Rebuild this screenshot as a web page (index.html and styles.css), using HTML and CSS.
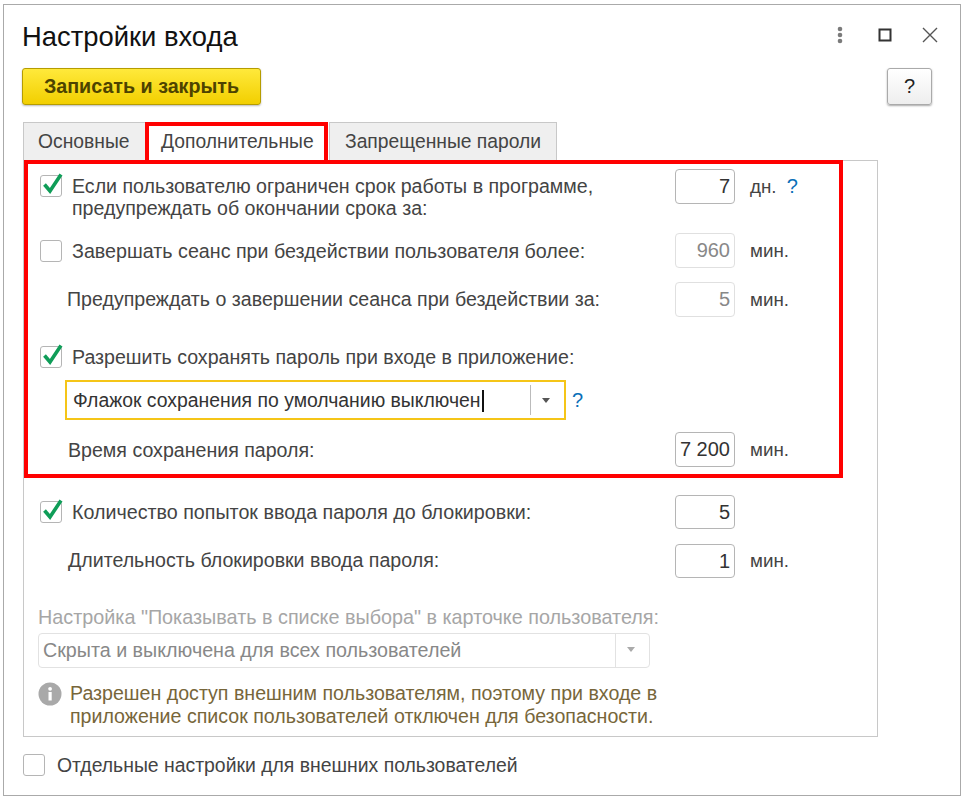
FILE: index.html
```html
<!DOCTYPE html>
<html lang="ru">
<head>
  <meta charset="UTF-8">
  <title>Настройки входа</title>
  <link rel="stylesheet" href="styles.css">
</head>
<body>

  <div class="window">

    <!-- Заголовок окна -->
    <div class="header">
      <h1>Настройки входа</h1>
      <div class="controls">
        <svg width="24" height="24" viewBox="0 0 24 24"><circle cx="12" cy="6" r="2.3" fill="#7b7b7b"/><circle cx="12" cy="12" r="2.3" fill="#7b7b7b"/><circle cx="12" cy="18" r="2.3" fill="#7b7b7b"/></svg>
        <svg width="24" height="24" viewBox="0 0 24 24"><rect x="6.5" y="6.5" width="11" height="11" fill="none" stroke="#333" stroke-width="2"/></svg>
        <svg width="24" height="24" viewBox="0 0 24 24"><path d="M5 5 L19 19 M19 5 L5 19" fill="none" stroke="#555" stroke-width="1.4"/></svg>
      </div>
    </div>

    <div class="toolbar">
      <button class="save">Записать и закрыть</button>
      <button class="help">?</button>
    </div>

    <!-- Вкладки -->
    <div class="tabs">
      <div class="tab">Основные</div>
      <div class="tab active">Дополнительные</div>
      <div class="tab">Запрещенные пароли</div>
    </div>

    <div class="panel">

      <!-- Выделенный блок настроек -->
      <div class="section">
        <div class="row row-first">
          <label class="check-label">
            <span class="checkbox"><svg width="26" height="26" viewBox="0 0 26 26"><path d="M5.5 13.5 L11 20 L22 3.5" fill="none" stroke="#0f9d58" stroke-width="3.6"/></svg></span>
            <span>Если пользователю ограничен срок работы в программе,<br>предупреждать об окончании срока за:</span>
          </label>
          <div class="field">7</div>
          <div class="unit">дн. <span class="hint">?</span></div>
        </div>
        <div class="row row-next">
          <label class="check-label wide">
            <span class="checkbox"></span>
            <span>Завершать сеанс при бездействии пользователя более:</span>
          </label>
          <div class="field disabled">960</div>
          <div class="unit">мин.</div>
        </div>
        <div class="row row-next">
          <div class="text-label short">Предупреждать о завершении сеанса при бездействии за:</div>
          <div class="field disabled">5</div>
          <div class="unit">мин.</div>
        </div>
        <label class="check-label save-password">
          <span class="checkbox"><svg width="26" height="26" viewBox="0 0 26 26"><path d="M5.5 13.5 L11 20 L22 3.5" fill="none" stroke="#0f9d58" stroke-width="3.6"/></svg></span>
          <span>Разрешить сохранять пароль при входе в приложение:</span>
        </label>
        <div class="combo-row">
          <div class="combo focused">
            <div class="combo-text">Флажок сохранения по умолчанию выключен<span class="caret"></span></div>
            <div class="combo-arrow"></div>
          </div>
          <span class="hint">?</span>
        </div>
        <div class="row row-time">
          <div class="text-label">Время сохранения пароля:</div>
          <div class="field">7 200</div>
          <div class="unit">мин.</div>
        </div>
      </div>

      <div class="rest">
        <div class="row">
          <label class="check-label wide">
            <span class="checkbox"><svg width="26" height="26" viewBox="0 0 26 26"><path d="M5.5 13.5 L11 20 L22 3.5" fill="none" stroke="#0f9d58" stroke-width="3.6"/></svg></span>
            <span>Количество попыток ввода пароля до блокировки:</span>
          </label>
          <div class="field">5</div>
        </div>
        <div class="row row-next">
          <div class="text-label">Длительность блокировки ввода пароля:</div>
          <div class="field">1</div>
          <div class="unit">мин.</div>
        </div>

        <div class="muted-label">Настройка "Показывать в списке выбора" в карточке пользователя:</div>
        <div class="combo combo-disabled">
          <div class="combo-text">Скрыта и выключена для всех пользователей</div>
          <div class="combo-arrow"></div>
        </div>

        <div class="note">
          <svg width="24" height="24" viewBox="0 0 24 24"><circle cx="12" cy="12" r="11.5" fill="#a9a9a9"/><rect x="10.5" y="10" width="3.2" height="8.5" fill="#fff"/><circle cx="12.1" cy="6.8" r="1.9" fill="#fff"/></svg>
          <p>Разрешен доступ внешним пользователям, поэтому при входе в<br>приложение список пользователей отключен для безопасности.</p>
        </div>
      </div>
    </div>

    <label class="check-label bottom">
      <span class="checkbox"></span>
      <span>Отдельные настройки для внешних пользователей</span>
    </label>

  </div>

</body>
</html>
```

FILE: styles.css
```css
* {
  box-sizing: border-box;
}

body {
  margin: 0;
  background: #fff;
  color: #444;
  font-family: "Liberation Sans", Arial, sans-serif;
  font-size: 19.6px;
}

.window {
  width: 958px;
  height: 792px;
  margin: 4px 1px 2px 3px;
  padding-left: 18px;
  border: 1px solid #aaa;
  background: #fff;
}

.header {
  display: flex;
  justify-content: space-between;
  align-items: center;
  height: 63px;
  padding-right: 18px;
}

h1 {
  margin: 0;
  color: #111;
  font-size: 27.4px;
  font-weight: normal;
}

.controls {
  display: flex;
  gap: 21px;
  margin-top: -3px;
}

.toolbar {
  display: flex;
  justify-content: space-between;
  height: 37px;
  padding-right: 28px;
}

button {
  font-family: inherit;
  border-radius: 3px;
}

.save {
  width: 239px;
  border: 1px solid #b59c00;
  background: linear-gradient(#ffe93b, #f2cf00);
  box-shadow: 0 1px 2px #bbb;
  color: #4d4300;
  font-size: 19.7px;
  font-weight: bold;
}

.help {
  width: 45px;
  border: 1px solid #aaa;
  background: linear-gradient(#fff, #eee);
  box-shadow: 0 1px 2px #aaa;
  color: #222;
  font-size: 20px;
}

.tabs {
  display: flex;
  height: 39px;
  margin: 17px 0 0 1px;
}

.tab {
  height: 38px;
  padding: 0 15px;
  border: 1px solid #c8c8c8;
  border-bottom: none;
  background: #efefef;
  font-size: 19.3px;
  line-height: 38px;
  white-space: nowrap;
}

.tab:first-child {
  width: 123px;
  padding: 0 14px;
}

.tab:last-child {
  width: 228px;
  margin-left: 1px;
}

.tab.active {
  width: 183px;
  margin-left: -1px;
  padding: 0 12px;
  border: 4px solid #f00;
  border-bottom: none;
  background: #fff;
  line-height: 32px;
}

.panel {
  width: 855px;
  height: 577px;
  margin: -1px 0 0 1px;
  border: 1px solid #c8c8c8;
}

.section {
  width: 819px;
  height: 318px;
  margin-top: -1px;
  padding: 5px 0 0 12px;
  border: 4px solid #f00;
}

.row {
  display: grid;
  grid-template-columns: 635px 60px auto;
  align-items: center;
}

.row-first {
  align-items: start;
  height: 50px;
}

.row-next {
  margin-top: 14px;
}

.row-time {
  margin-top: 12px;
}

.row-time .text-label {
  padding-top: 2px;
}

.check-label {
  display: flex;
  align-items: flex-start;
  gap: 10px;
  line-height: 22px;
}

.check-label.wide {
  font-size: 19.7px;
}

.row-first .check-label {
  padding-top: 6px;
}

.checkbox {
  flex: none;
  width: 22px;
  height: 22px;
  border: 1px solid #b5b5b5;
  border-radius: 3px;
  background: #fff;
  position: relative;
}

.checkbox svg {
  position: absolute;
  left: -2px;
  top: -5px;
}

.text-label {
  padding-left: 28px;
}

.text-label.short {
  padding-left: 27px;
}

.field {
  height: 35px;
  padding-right: 4px;
  border: 1px solid #b5b5b5;
  border-radius: 4px;
  color: #333;
  font-size: 20px;
  line-height: 33px;
  text-align: right;
}

.field.disabled {
  border-color: #e0e0e0;
  color: #888;
}

.unit {
  padding-left: 15px;
  font-size: 18.8px;
  line-height: 35px;
}

.hint {
  margin-left: 5px;
  color: #0a6fb8;
  font-size: 20px;
}

.combo-row .hint {
  margin-left: 6px;
}

.save-password {
  margin-top: 29px;
}

.combo-row {
  display: flex;
  align-items: center;
  margin: 12px 0 0 25px;
}

.combo {
  display: flex;
  align-items: center;
  width: 501px;
  height: 40px;
  border: 2px solid #f5c518;
}

.combo-text {
  flex: 1;
  padding-left: 6px;
  color: #333;
  font-size: 19.4px;
}

.caret {
  display: inline-block;
  width: 2px;
  height: 22px;
  margin-left: 1px;
  background: #111;
  vertical-align: -5px;
}

.combo-arrow {
  width: 34px;
  height: 30px;
  border-left: 1px solid #bbb;
  position: relative;
}

.combo-arrow::after {
  content: "";
  position: absolute;
  left: 11px;
  top: 13px;
  border: 4px solid transparent;
  border-top: 5px solid #555;
  border-bottom: none;
}

.rest {
  padding: 17px 0 0 16px;
}

.rest .row {
  height: 34px;
}

.rest .field {
  height: 34px;
  line-height: 32px;
}

.muted-label {
  margin: 29px 0 0 -2px;
  color: #a6a6a6;
  font-size: 19.8px;
  line-height: 22px;
}

.combo-disabled {
  width: 612px;
  height: 35px;
  margin: 5px 0 0 -2px;
  border: 1px solid #e2e2e2;
  border-radius: 4px;
}

.combo-disabled .combo-text {
  padding-left: 4px;
  color: #888;
  font-size: 19.7px;
}

.combo-disabled .combo-arrow {
  height: 33px;
  border-left-color: #e2e2e2;
}

.combo-disabled .combo-arrow::after {
  border-top-color: #aaa;
}

.note {
  display: flex;
  gap: 8px;
  margin: 14px 0 0 -2px;
}

.note p {
  margin: 0;
  color: #77663a;
  line-height: 23px;
}

.bottom {
  gap: 12px;
  margin: 17px 0 0 1px;
  font-size: 19.4px;
}
```
